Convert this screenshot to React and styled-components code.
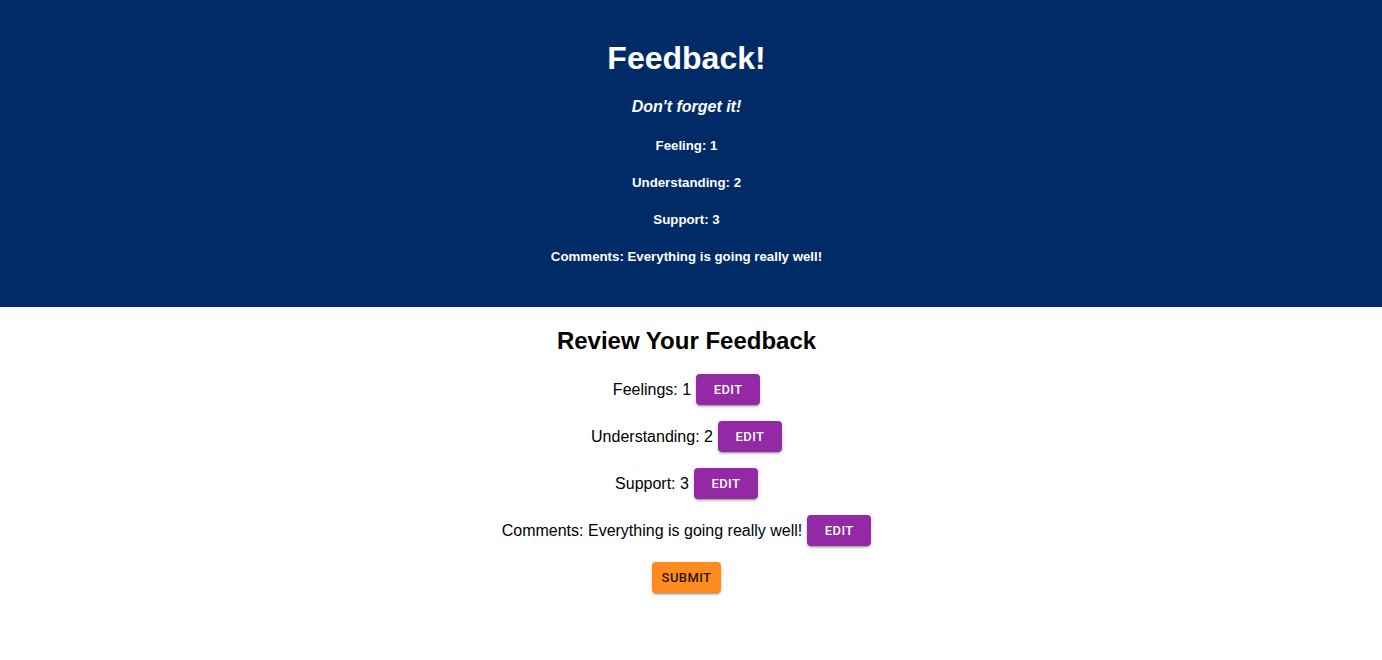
import React from 'react'
import styled, { createGlobalStyle } from 'styled-components'

const Global = createGlobalStyle`
  body {
    margin: 0;
    font-family: 'Liberation Sans', Arial, sans-serif;
    background: #fff;
    color: #000;
  }
`

const Page = styled.div`
  text-align: center;
`

const Header = styled.header`
  background-color: #002b66;
  color: #fff;
  padding: 19px 9px 21px 0;
  display: flow-root;
`

const Title = styled.h1`
  font-size: 32px;
  margin: 21px 0;
`

const Tagline = styled.h4`
  font-style: italic;
  font-size: 16px;
  margin: 21px 0;
`

const Summary = styled.h5`
  font-size: 13.28px;
  margin: 22px 0;
`

const Review = styled.section`
  display: flow-root;
  padding-right: 9px;
`

const Heading = styled.h2`
  font-size: 24px;
  margin: 20px 0 19px;
`

const Row = styled.p`
  font-size: 16px;
  margin: 16px 0;
  min-height: 31px;
  display: flex;
  justify-content: center;
  align-items: center;
  gap: 5px;
`

const Button = styled.button`
  font-family: Roboto, 'Liberation Sans', sans-serif;
  font-weight: 500;
  font-size: 13px;
  letter-spacing: 0.4px;
  text-transform: uppercase;
  min-width: 64px;
  height: 31px;
  padding: 4px 10px;
  border: 0;
  border-radius: 4px;
  cursor: pointer;
  color: ${p => (p.$tone === 'submit' ? 'rgba(0,0,0,0.87)' : '#fff')};
  background-color: ${p => (p.$tone === 'submit' ? '#ff8a1e' : '#9329a4')};
  box-shadow: 0px 3px 1px -2px rgba(0,0,0,0.2), 0px 2px 2px 0px rgba(0,0,0,0.14), 0px 1px 5px 0px rgba(0,0,0,0.12);
`

const feedback = {
  feeling: 1,
  understanding: 2,
  support: 3,
  comments: 'Everything is going really well!',
}

export default function App() {
  return (
    <Page>
      <Global />
      <Header>
        <Title>Feedback!</Title>
        <Tagline>Don't forget it!</Tagline>
        <Summary>Feeling: {feedback.feeling}</Summary>
        <Summary>Understanding: {feedback.understanding}</Summary>
        <Summary>Support: {feedback.support}</Summary>
        <Summary>Comments: {feedback.comments}</Summary>
      </Header>
      <Review>
        <Heading>Review Your Feedback</Heading>
        <Row>Feelings: {feedback.feeling}<Button>Edit</Button></Row>
        <Row>Understanding: {feedback.understanding}<Button>Edit</Button></Row>
        <Row>Support: {feedback.support}<Button>Edit</Button></Row>
        <Row>Comments: {feedback.comments}<Button>Edit</Button></Row>
        <Row><Button $tone="submit">Submit</Button></Row>
      </Review>
    </Page>
  )
}
